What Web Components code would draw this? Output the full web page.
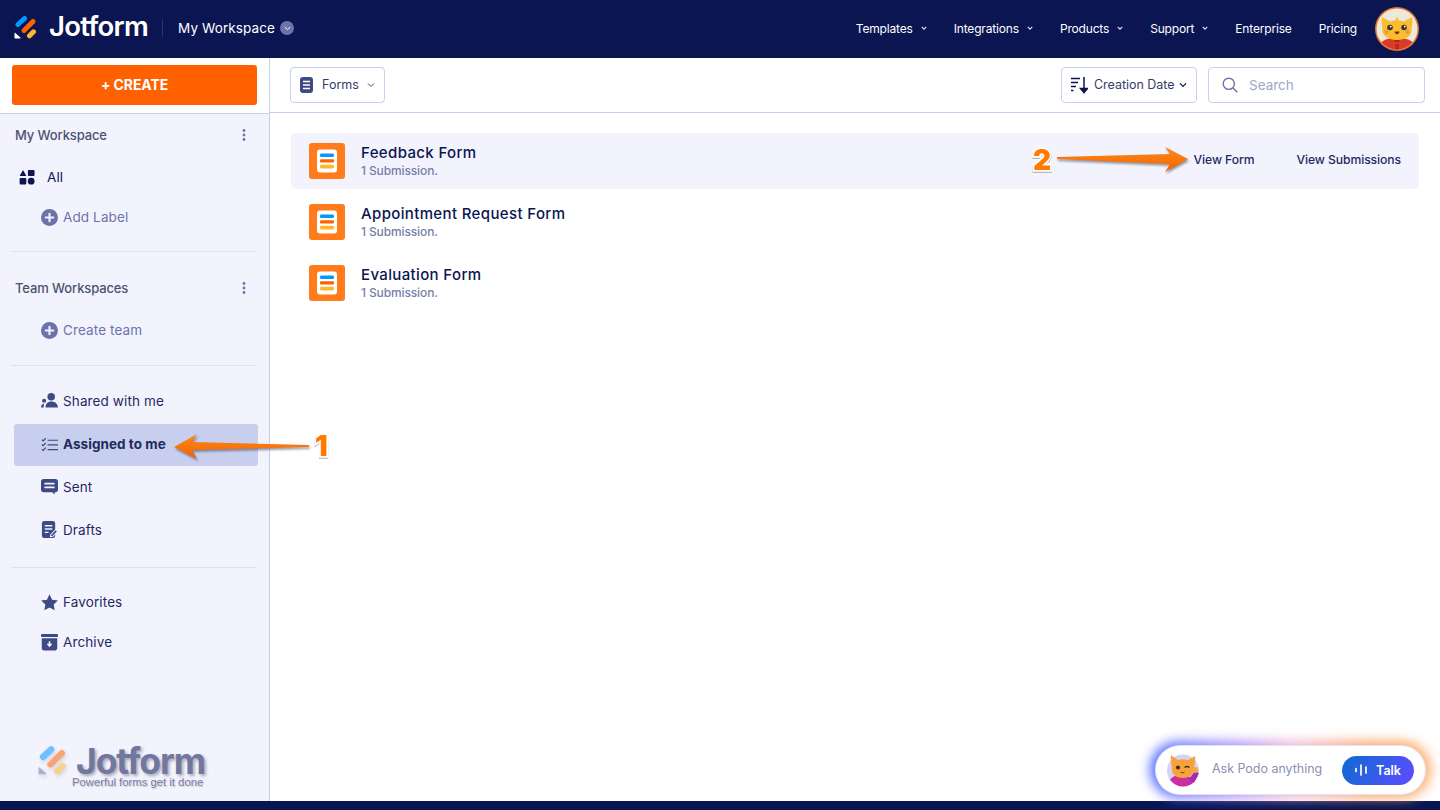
<!DOCTYPE html>
<html lang="en"><head><meta charset="utf-8"><title>Jotform</title>
<style>
html,body{margin:0;height:100%;overflow:hidden;background:#fff;font-family:"Inter","Liberation Sans",sans-serif}
jf-app{height:810px}
</style></head><body>
<jf-app>
  <jf-header slot="header"></jf-header>
  <jf-sidebar slot="sidebar">
    <jf-section-head>My Workspace</jf-section-head>
    <jf-item icon="all" tone="dark" h="42" x="47">All</jf-item>
    <jf-item icon="plus" tone="muted" h="38">Add Label</jf-item>
    <jf-rule t="15"></jf-rule>
    <jf-section-head t="15">Team Workspaces</jf-section-head>
    <jf-item icon="plus" tone="muted" h="42">Create team</jf-item>
    <jf-rule t="14"></jf-rule>
    <div style="height:14px;flex:none"></div>
    <jf-item icon="shared" h="43">Shared with me</jf-item>
    <jf-item icon="assigned" h="43" active>Assigned to me</jf-item>
    <jf-item icon="sent" h="43">Sent</jf-item>
    <jf-item icon="drafts" h="43">Drafts</jf-item>
    <jf-rule t="15"></jf-rule>
    <div style="height:14px;flex:none"></div>
    <jf-item icon="star" h="40">Favorites</jf-item>
    <jf-item icon="archive" h="40">Archive</jf-item>
    <jf-watermark></jf-watermark>
  </jf-sidebar>
  <jf-toolbar slot="toolbar"></jf-toolbar>
  <jf-list slot="list">
    <jf-form-row title="Feedback Form" sub="1 Submission." hover></jf-form-row>
    <jf-form-row title="Appointment Request Form" sub="1 Submission."></jf-form-row>
    <jf-form-row title="Evaluation Form" sub="1 Submission."></jf-form-row>
  </jf-list>
</jf-app>
<jf-annotation n="1" style="left:172px;top:424px"></jf-annotation>
<jf-annotation n="2" style="left:1030px;top:140px"></jf-annotation>
<jf-podo></jf-podo>
<script>
const ICONS={
all:'<path d="M4.500 1 8.300 8H.7z"/><rect x="10" y="1" width="7.500" height="7" rx="1.200"/><rect x=".7" y="10" width="7.500" height="7.500" rx="1.200"/><circle cx="13.700" cy="13.700" r="3.800"/>',
plus:'<circle cx="9" cy="9" r="9"/><path d="M9 5v8M5 9h8" stroke="#f3f3fe" stroke-width="2.200" stroke-linecap="round"/>',
shared:'<circle cx="10.800" cy="5" r="4"/><path d="M4.800 16.500c-.2-4.300 2.600-6.500 6.200-6.500s6.800 2.200 7 6.500z"/><circle cx="3.300" cy="9.300" r="2.200"/><path d="M0 16.500c0-2.300 1.200-4 3.600-4.300-.6 1.200-.9 2.600-.8 4.300z"/>',
assigned:'<path d="M7 4.500h11M7 9.500h11M7 14.500h11" fill="none" stroke="currentColor" stroke-width="1.300"/><path d="M1 4l1.300 1.200L5 2.400M1 9l1.300 1.200L5 7.400M1 14l1.300 1.200L5 12.400" fill="none" stroke="currentColor" stroke-width="1.200"/>',
sent:'<path d="M2.600 1h12.800C16.800 1 18 2.200 18 3.600v8.800c0 1.400-1.200 2.600-2.600 2.600h-.9v2.600L11.800 15H2.600C1.200 15 0 13.800 0 12.400V3.600C0 2.200 1.200 1 2.600 1z"/><path d="M4.400 6h9.200M4.400 10h9.200" stroke="#f3f3fe" stroke-width="1.800" stroke-linecap="round"/>',
drafts:'<rect x="1" y="0" width="14" height="18" rx="2.400"/><path d="M4 5h8M4 8.500h8M4 12h4" stroke="#f3f3fe" stroke-width="1.500"/><path d="M10 16.600l.5-2.400 5-5 2 2-5 5z" fill="#3e4a83" stroke="#f3f3fe" stroke-width="1.100"/>',
star:'<path d="M9 .3l2.700 5.700 6.200.8-4.500 4.300 1.100 6.200L9 14.300l-5.500 3 1.100-6.200L.1 6.800l6.200-.8z"/>',
archive:'<rect x="0" y="0" width="18" height="3.200" rx=".8"/><path d="M.8 4.600h16.400v10.600c0 1.300-1 2.300-2.300 2.300H3.100c-1.300 0-2.300-1-2.300-2.300z"/><path d="M9 7.800v5M6.800 10.400 9 12.800l2.200-2.400" stroke="#f3f3fe" stroke-width="1.600" fill="none"/>'
};
const MARK=(white,o,s=24)=>`<svg viewBox="0 0 24 24" width="${s}" height="${s}" aria-hidden="true" style="opacity:${o}">
<path d="M.5 18.300V22.700c0 .4.300.7.700.7h4.800c.5 0 .7-.5.400-.8L1.300 18c-.3-.3-.8-.1-.8.300z" fill="${white}"/>
<g fill="none" stroke-linecap="round" stroke-width="5"><path d="M4 9.500 10.500 3.500" stroke="#0099ff"/><path d="M10 15.500 19 6.500" stroke="#ff6100"/><path d="M15.500 20.800 19.500 16.800" stroke="#ffb629"/></g></svg>`;
function def(name,css,html){
  customElements.define(name,class extends HTMLElement{
    constructor(){super();this.attachShadow({mode:'open'});}
    connectedCallback(){
      const h=typeof html==='function'?html(this):html;
      this.shadowRoot.innerHTML=`<style>${css}</style>${h}`;
    }
  });
}
def('jf-app',`:host{display:grid;grid-template-columns:270px 1fr;grid-template-rows:58px 55px 1fr 9px;color:#0a1551}
 .h{grid-column:1/3;grid-row:1}.s{grid-column:1;grid-row:2/4;min-height:0;display:flex}.t{grid-column:2;grid-row:2}.l{grid-column:2;grid-row:3}
 .f{grid-column:1/3;grid-row:4;background:#0a1551}`,
`<div class="h"><slot name="header"></slot></div><div class="s"><slot name="sidebar"></slot></div><div class="t"><slot name="toolbar"></slot></div><div class="l"><slot name="list"></slot></div><div class="f"></div>`);

const CHEV=(c,w=7,sw=1.700)=>`<svg width="${w}" height="${w*.7}" viewBox="0 0 10 7" aria-hidden="true"><path d="M1.200 1.500 5 5.300l3.800-3.800" fill="none" stroke="${c}" stroke-width="${sw}"/></svg>`;
def('jf-header',`:host{display:flex;align-items:center;height:58px;background:#0a1551;color:#fff;padding:0 21px 0 14px;box-sizing:border-box}
 .logo{display:flex;align-items:center;gap:11px;margin-bottom:4px}
 .word{font:600 27.500px/1 "Inter",sans-serif;letter-spacing:-.75px}
 .sep{width:1px;height:18px;background:#2b3468;margin:0 15px 2px 14px}
 .ws{display:flex;align-items:center;gap:5px;font-size:13.500px;letter-spacing:.1px;margin-bottom:2px}
 .dot{width:14px;height:14px;border-radius:50%;background:#6c73a8;display:flex;align-items:center;justify-content:center}
 nav{margin-left:auto;display:flex;align-items:center;font-size:12px;letter-spacing:-.17px}
 nav span{display:inline-flex;align-items:center;gap:8px;margin-left:27px;padding-bottom:2px}
 .av{width:44px;height:44px;margin-left:18px;display:block}`,
`<div class="logo">${MARK('#fff',1,24)}<span class="word">Jotform</span></div><div class="sep"></div>
 <div class="ws">My Workspace <span class="dot">${CHEV('#fff',7,1.400)}</span></div>
 <nav><span>Templates ${CHEV('#e6e8f7',6)}</span><span>Integrations ${CHEV('#e6e8f7',6)}</span><span>Products ${CHEV('#e6e8f7',6)}</span><span>Support ${CHEV('#e6e8f7',6)}</span><span>Enterprise</span><span>Pricing</span>
 <svg class="av" viewBox="0 0 44 44" aria-hidden="true"><defs><clipPath id="c"><circle cx="22" cy="22" r="20.500"/></clipPath></defs>
 <circle cx="22" cy="22" r="22" fill="#e8702a"/><g clip-path="url(#c)"><rect width="44" height="44" fill="#ece9dc"/>
 <path d="M3 44c0-9 6-13 19-13s19 4 19 13z" fill="#dc3a26"/><path d="M18 30h8l-2 5h-4z" fill="#a92619"/><path d="M20 37h4v7h-4z" fill="#b82c1c"/>
 <path d="M7 10l8 4.500c1.800-.7 3.500-1 5-1.100l2-3.400 2 3.400c1.500.1 3.200.4 5 1.100l8-4.500c.5 4 .5 7.500-.5 11 1.500 7-5 12-14.500 12S6 28 7.500 21C6.500 17.500 6.500 14 7 10z" fill="#f9bd2e"/>
 <circle cx="15" cy="20.500" r="2.800" fill="#3b3431"/><circle cx="29" cy="20.500" r="2.800" fill="#3b3431"/><circle cx="15.800" cy="19.600" r=".9" fill="#fff"/><circle cx="29.800" cy="19.600" r=".9" fill="#fff"/><circle cx="11.500" cy="25" r="2.200" fill="#f29a3c"/><circle cx="32.500" cy="25" r="2.200" fill="#f29a3c"/>
 <path d="M19.500 24.500h5c-.3 3.500-4.700 3.500-5 0z" fill="#8a2a1c"/></g></svg></nav>`);

def('jf-sidebar',`:host{display:flex;flex-direction:column;width:270px;height:743px;box-sizing:border-box;background:#f3f3fe;border-right:1px solid #c8ceed}
 .top{height:56px;background:#fff;border-bottom:1px solid #c8ceed;box-sizing:border-box;padding:7px 12px 0;flex:none}
 button{display:block;width:245px;height:40px;background:#ff6100;border:0;border-radius:3px;color:#fff;font:700 14px "Inter",sans-serif;letter-spacing:-.1px;padding:0 0 2px}
 .b{flex:1;display:flex;flex-direction:column;min-height:0}`,
`<div class="top"><button>+ CREATE</button></div><div class="b"><slot></slot></div>`);

def('jf-section-head',`:host{display:flex;align-items:center;height:42px;padding:0 23px 0 15px;font-size:13px;font-weight:500;letter-spacing:-.12px;color:#4c536f;flex:none}
 svg{margin-left:auto}`,
e=>`<style>:host{margin-top:${e.getAttribute('t')||0}px}</style><slot></slot><svg width="4" height="12" viewBox="0 0 4 12" fill="#6c73a8" aria-hidden="true"><circle cx="2" cy="1.500" r="1.400"/><circle cx="2" cy="6" r="1.400"/><circle cx="2" cy="10.500" r="1.400"/></svg>`);

def('jf-item',`:host{display:flex;flex:none;padding:0 11px 0 14px;box-sizing:border-box;font-size:13.500px;letter-spacing:.12px}
 .r{flex:1;display:flex;align-items:center;border-radius:3px;box-sizing:border-box}
 svg{flex:none}`,
e=>{
 const ic=e.getAttribute('icon'),h=+(e.getAttribute('h')||42),tone=e.getAttribute('tone'),act=e.hasAttribute('active');
 const iconc=tone==='dark'?'#0a1551':tone==='muted'?'#6c73a8':'#3e4a83';
 const ix=tone==='dark'?5:27;
 const sz=tone==='dark'?16:17;
 const tx=(e.getAttribute('x')?+e.getAttribute('x'):63)-14-ix-sz;
 return `<style>:host{height:${h}px}.r{${act?'background:#c8ceed;margin:1px 0 0;font-weight:700;letter-spacing:.05px;':''}${h===43?'padding-bottom:2px;':''}color:${tone==='dark'?'#0a1551':tone==='muted'?'#6c73a8':'#1f2a5e'};padding-left:${ix}px;gap:${tx}px}svg{color:${iconc};fill:${iconc}}</style>
 <div class="r"><svg width="${sz}" height="${sz}" viewBox="0 0 18 18" aria-hidden="true">${ICONS[ic]}</svg><span><slot></slot></span></div>`;
});

def('jf-rule',`:host{display:block;height:1px;background:#dfe0ee;margin:0 12px 0 11px;flex:none}`,e=>`<style>:host{margin-top:${e.getAttribute('t')||0}px}</style>`);

def('jf-watermark',`:host{display:block;margin-top:auto;height:56px;flex:none;padding-left:38px}
 .w{display:flex;align-items:flex-start;gap:8px;height:34px}
 svg{filter:drop-shadow(1px 2px 2px rgba(60,60,80,.35))}
 .t{font:700 35.500px/30px "Inter",sans-serif;letter-spacing:-1.100px;color:#71789f;text-shadow:2px 2px 3px rgba(60,60,80,.4);margin-top:2px}
 .s{font:11.300px/1 "Liberation Sans",sans-serif;color:#7b80a3;margin:-2px 0 0 34px;text-shadow:1px 1px 1px rgba(60,60,80,.25)}`,
`<div class="w">${MARK('#71789f',.55,30)}<span class="t">Jotform</span></div><div class="s">Powerful forms get it done</div>`);

def('jf-toolbar',`:host{display:flex;align-items:flex-start;height:55px;box-sizing:border-box;border-bottom:1px solid #c8ceed;padding:9px 15px 0 20px;background:#fff}
 .b{height:36px;box-sizing:border-box;border:1px solid #c8ceed;border-radius:4px;display:flex;align-items:center;font-size:12.500px;color:#343c6a;background:#fff;padding-bottom:1px}
 .forms{width:95px;padding-left:9px}.forms svg.i{margin-right:9px}.forms svg.c{margin-left:8px}
 .date{width:136px;padding-left:9px;margin-left:auto;letter-spacing:-.03px}.date svg.i{margin-right:6px}.date svg.c{margin-left:5px}
 .search{width:217px;margin-left:11px;padding-left:13px;font-size:13.500px;color:#a0a5cc;padding-bottom:0}.search svg{margin-right:11px}`,
`<div class="b forms"><svg class="i" width="13" height="16" viewBox="0 0 13 16" aria-hidden="true"><rect width="13" height="16" rx="3" fill="#3e4a83"/><path d="M3 4.500h7M3 8h7M3 11.500h7" stroke="#fff" stroke-width="1.500"/></svg>Forms<svg class="c" width="8" height="6" viewBox="0 0 10 7" aria-hidden="true"><path d="M1.200 1.500 5 5.300l3.800-3.800" fill="none" stroke="#343c6a" stroke-width="1.200"/></svg></div>
 <div class="b date"><svg class="i" width="17" height="18" viewBox="0 0 17 18" aria-hidden="true"><path d="M0 2.500h9M0 6.500h7M0 10.500h5M0 14.500h2.500" stroke="#0a1551" stroke-width="1.700"/><path d="M13 1v14M9.500 12.500l3.500 4 3.500-4z" stroke="#0a1551" stroke-width="1.500" fill="#0a1551"/></svg>Creation Date<svg class="c" width="8" height="6" viewBox="0 0 10 7" aria-hidden="true"><path d="M1.200 1.500 5 5.300l3.800-3.800" fill="none" stroke="#0a1551" stroke-width="1.600"/></svg></div>
 <div class="b search"><svg width="16" height="16" viewBox="0 0 16 16" aria-hidden="true"><circle cx="6.800" cy="6.800" r="5.600" fill="none" stroke="#6c73a8" stroke-width="1.400"/><path d="m11 11 4.200 4.200" stroke="#6c73a8" stroke-width="1.500"/></svg>Search</div>`);

def('jf-list',`:host{display:flex;flex-direction:column;padding:20px 21px 0;gap:5px}`,`<slot></slot>`);

def('jf-form-row',`:host{display:flex;height:56px;box-sizing:border-box;border-radius:5px;align-items:center;padding:0 18px;color:#0a1551}
 :host([hover]){background:#f3f3fe}
 .ic{width:36px;height:36px;flex:none;display:block}
 .tx{margin-left:16px;display:flex;flex-direction:column}
 .ti{font-size:15px;font-weight:500;line-height:18px;letter-spacing:.36px}
 .su{font-size:12px;font-weight:500;color:#777ea9;line-height:14px;margin-top:2px;letter-spacing:-.12px}
 .a{margin-left:auto;display:flex;font-size:12.200px;font-weight:500;color:#1f2a5e;margin-top:-4px;letter-spacing:-.1px}
 .a span+span{margin-left:42px}`,
e=>`<svg class="ic" viewBox="0 0 36 36" aria-hidden="true"><rect width="36" height="36" rx="3" fill="#ff7b1c"/><rect x="8" y="6.500" width="20" height="23" rx="3" fill="#fff"/><rect x="11" y="10.500" width="14" height="3.600" rx="1.400" fill="#0099ff"/><rect x="11" y="16.200" width="14" height="3.400" rx="1" fill="#ff6100"/><rect x="11" y="21.800" width="14" height="3.600" rx="1.400" fill="#ffb629"/></svg>
 <div class="tx"><span class="ti">${e.getAttribute('title')}</span><span class="su">${e.getAttribute('sub')}</span></div>
 ${e.hasAttribute('hover')?'<div class="a"><span>View Form</span><span>View Submissions</span></div>':''}`);

def('jf-annotation',`:host{position:absolute;display:block;width:160px;height:36px}
 svg{position:absolute;left:0;top:0;overflow:visible;filter:drop-shadow(1px 2px 1px rgba(70,70,90,.55))}
 b{position:absolute;font:900 28px/1 "Inter",sans-serif;color:#ff7a00;-webkit-text-stroke:3.500px #fff;paint-order:stroke fill;filter:drop-shadow(0 1px .6px rgba(110,110,110,.55))}`,
e=>{
 const n=e.getAttribute('n');
 const g=`<defs><linearGradient id="g" x1="0" y1="0" x2="0" y2="1"><stop offset="0" stop-color="#ff8a1a"/><stop offset="1" stop-color="#f26300"/></linearGradient></defs>`;
 return n==='1'
 ?`<svg width="140" height="36" viewBox="0 0 140 36" aria-hidden="true">${g}<path fill="url(#g)" d="M2 23 25 10 20 18 137 21 137 23 20 26 25 35z"/></svg><b style="left:143px;top:8px">1</b>`
 :`<svg width="160" height="36" viewBox="0 0 160 36" aria-hidden="true">${g}<path fill="url(#g)" d="M158 19 135 7 140 14 27 17 27 19 140 24 135 32z"/></svg><b style="left:3px;top:6px">2</b>`;
});

def('jf-podo',`:host{position:absolute;left:1156px;top:746px;width:269px;height:48px;display:block}
 .glow{position:absolute;inset:-5px -6px -4px -6px;border-radius:30px;background:linear-gradient(90deg,#4f6dff 0%,#a88cff 28%,#f2b9d2 52%,#ffa468 78%,#ffb070 100%);filter:blur(6px)}
 .card{position:relative;height:48px;background:#fff;border-radius:24px;display:flex;align-items:center;padding:0 11px;box-sizing:border-box;box-shadow:0 0 0 1px #e2e4f6}
 .t{margin-left:13px;font-size:12.500px;color:#8a8fb5;letter-spacing:-.03px;margin-bottom:4px}
 .talk{margin-left:auto;width:72px;height:29px;border-radius:15px;background:linear-gradient(120deg,#0d6bd0,#5e4cff);color:#fff;font-size:12.500px;font-weight:600;display:flex;align-items:center;justify-content:center;gap:9px}`,
`<div class="glow"></div><div class="card"><svg width="32" height="33" viewBox="0 0 32 33" aria-hidden="true"><defs><clipPath id="p"><circle cx="16" cy="16.500" r="16"/></clipPath></defs><g clip-path="url(#p)"><rect width="32" height="33" fill="#d6d4f2"/><path d="M1 33c0-8 5-12 13-12s15 4 17 12z" fill="#c92fa0"/><path d="M22 25l6-8 4 2-5 11z" fill="#a92ab0"/></g>
 <path d="M4 1l7 5c3-1 7-1 10 0l7-4c.5 4 0 8-1 11 .5 7-4 11-11 11S4 20 5 13C4 9 3.500 5 4 1z" fill="#f8a23c"/><circle cx="28" cy="16" r="3" fill="#f6a744"/><circle cx="11" cy="13.500" r="2.100" fill="#4a2c1e"/><path d="M17.500 13.500q2.500-2 5 0" stroke="#4a2c1e" stroke-width="1.300" fill="none"/><path d="M13.500 18q2 2 4 0" stroke="#8a3a1c" stroke-width="1" fill="#e8622a"/></svg>
 <span class="t">Ask Podo anything</span><span class="talk"><svg width="12" height="12" viewBox="0 0 12 12" aria-hidden="true"><path d="M1 4.500v3M6 1v10M11 3v6" stroke="#fff" stroke-width="1.700" stroke-linecap="round"/></svg>Talk</span></div>`);
</script>
</body></html>
